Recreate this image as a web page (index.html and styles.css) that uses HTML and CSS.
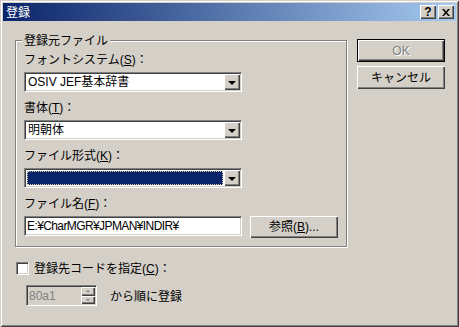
FILE: index.html
```html
<!DOCTYPE html>
<html lang="ja">
<head>
    <meta charset="UTF-8">
    <title>登録</title>
    <link rel="stylesheet" href="styles.css">
</head>
<body>
    <div class="window">
        <div class="titlebar">
            <span class="title">登録</span>
            <div class="caption-btns">
                <span class="cap-btn help">?</span>
                <span class="cap-btn close">
                    <svg width="8" height="7" viewBox="0 0 8 7">
                        <path d="M0 0h2l2 2.5 2-2.5h2l-3 3.5 3 3.5h-2l-2-2.5-2 2.5h-2l3-3.5z" fill="#000"/>
                    </svg>
                </span>
            </div>
        </div>

        <div class="client">
            <div class="main">
                <div class="group">
                    <span class="group-title">登録元ファイル</span>

                    <div class="field-label">フォントシステム(<u>S</u>)：</div>
                    <div class="combo">
                        <div class="combo-text">OSIV JEF基本辞書</div>
                        <span class="drop-btn"><i class="arrow"></i></span>
                    </div>

                    <div class="field-label">書体(<u>T</u>)：</div>
                    <div class="combo">
                        <div class="combo-text">明朝体</div>
                        <span class="drop-btn"><i class="arrow"></i></span>
                    </div>

                    <div class="field-label">ファイル形式(<u>K</u>)：</div>
                    <div class="combo">
                        <div class="combo-text selected"></div>
                        <span class="drop-btn"><i class="arrow"></i></span>
                    </div>

                    <div class="field-label">ファイル名(<u>F</u>)：</div>
                    <div class="file-row">
                        <div class="edit">E:¥CharMGR¥JPMAN¥INDIR¥</div>
                        <div class="btn browse">参照(<u>B</u>)...</div>
                    </div>
                </div>

                <div class="check-row">
                    <span class="checkbox"></span>
                    <span class="check-label">登録先コードを指定(<u>C</u>)：</span>
                </div>

                <div class="spin-row">
                    <div class="spinner">
                        <span class="spin-text">80a1</span>
                        <div class="spin-btns">
                            <span class="spin-btn"><i class="tri up"></i></span>
                            <span class="spin-btn"><i class="tri down"></i></span>
                        </div>
                    </div>
                    <span class="spin-label">から順に登録</span>
                </div>
            </div>

            <div class="side">
                <div class="btn default disabled">OK</div>
                <div class="btn">キャンセル</div>
            </div>
        </div>
    </div>
</body>
</html>
```

FILE: styles.css
```css
body {
    margin: 0;
    background-color: #d4d0c8;
    font-family: "Liberation Sans", "Noto Sans CJK JP", sans-serif;
    font-size: 12px;
    line-height: 14px;
    color: #000;
}
u {
    text-underline-offset: 1px;
}
.window {
    width: 459px;
    height: 327px;
    box-sizing: border-box;
    padding: 3px;
    background-color: #d4d0c8;
    box-shadow: inset 1px 1px #d4d0c8, inset -1px -1px #404040,
                inset 2px 2px #fff, inset -2px -2px #808080;
}
.titlebar {
    height: 18px;
    display: flex;
    align-items: center;
    justify-content: space-between;
    padding: 0 2px 0 2px;
    background: linear-gradient(to right, #0a246a, #a6caf0);
}
.title {
    color: #fff;
    font-family: "Noto Sans CJK JP", sans-serif;
    padding-left: 1px;
}
.caption-btns {
    display: flex;
    gap: 2px;
}
.cap-btn {
    width: 16px;
    height: 14px;
    box-sizing: border-box;
    display: flex;
    align-items: center;
    justify-content: center;
    background-color: #d4d0c8;
    box-shadow: inset 1px 1px #fff, inset -1px -1px #404040, inset -2px -2px #808080;
}
.help {
    font-weight: bold;
    font-size: 12px;
    line-height: 12px;
}
.client {
    display: flex;
    padding: 19px 0 0 12px;
}
.group {
    width: 332px;
    box-sizing: border-box;
    display: flex;
    flex-direction: column;
    align-items: flex-start;
    padding: 0 8px 8px 8px;
    border: 1px solid #808080;
    box-shadow: inset 1px 1px #fff, 1px 1px #fff;
}
.group-title {
    margin: -8px 0 0 -2px;
    padding: 0 2px;
    background-color: #d4d0c8;
    font-family: "Noto Sans CJK JP", sans-serif;
}
.field-label {
    margin-top: 9px;
}
.group-title + .field-label {
    margin-top: 6px;
}
.combo,
.edit {
    width: 218px;
    height: 20px;
    box-sizing: border-box;
    margin-top: 5px;
    display: flex;
    background-color: #fff;
    border: 1px solid;
    border-color: #808080 #fff #fff #808080;
    box-shadow: inset 1px 1px #404040, inset -1px -1px #d4d0c8;
    padding: 1px;
}
.combo-text {
    flex: 1;
    padding: 1px 2px;
    line-height: 14px;
}
.combo-text.selected {
    margin: 1px;
    background-color: #0a246a;
    outline: 1px dotted #d8d0a0;
    outline-offset: -1px;
}
.drop-btn {
    width: 16px;
    height: 16px;
    box-sizing: border-box;
    display: flex;
    align-items: center;
    justify-content: center;
    background-color: #d4d0c8;
    box-shadow: inset 1px 1px #fff, inset -1px -1px #404040, inset -2px -2px #808080;
}
.arrow {
    width: 0;
    height: 0;
    border-left: 4px solid transparent;
    border-right: 4px solid transparent;
    border-top: 4px solid #000;
    margin-top: 1px;
}
.file-row {
    display: flex;
    gap: 8px;
    margin-top: 5px;
}
.file-row .edit {
    margin-top: 0;
    padding: 2px 2px 0;
    letter-spacing: -0.6px;
}
.btn {
    width: 88px;
    height: 23px;
    box-sizing: border-box;
    display: flex;
    align-items: center;
    justify-content: center;
    background-color: #d4d0c8;
    box-shadow: inset 1px 1px #fff, inset -1px -1px #404040, inset -2px -2px #808080;
}
.btn.browse {
    height: 22px;
}
.btn.default {
    border: 1px solid #000;
    box-shadow: inset 1px 1px #fff, inset -1px -1px #404040, inset -2px -2px #808080;
}
.btn.disabled {
    color: #808080;
    text-shadow: 1px 1px #fff;
}
.check-row {
    display: flex;
    align-items: center;
    margin-top: 15px;
    height: 13px;
}
.checkbox {
    width: 13px;
    height: 13px;
    box-sizing: border-box;
    margin-left: 1px;
    background-color: #fff;
    border: 1px solid;
    border-color: #808080 #fff #fff #808080;
    box-shadow: inset 1px 1px #404040, inset -1px -1px #d4d0c8;
}
.check-label {
    margin-left: 5px;
}
.spin-row {
    display: flex;
    align-items: center;
    margin-top: 10px;
}
.spinner {
    width: 71px;
    height: 21px;
    box-sizing: border-box;
    margin-left: 11px;
    display: flex;
    justify-content: space-between;
    padding: 1px;
    border: 1px solid;
    border-color: #808080 #fff #fff #808080;
    box-shadow: inset 1px 1px #404040, inset -1px -1px #d4d0c8;
}
.spin-text {
    padding: 2px 1px 0;
    color: #808080;
}
.spin-btns {
    display: flex;
    flex-direction: column;
    width: 14px;
}
.spin-btn {
    flex: 1;
    display: flex;
    align-items: center;
    justify-content: center;
    box-shadow: inset 1px 1px #fff, inset -1px -1px #404040, inset -2px -2px #808080;
}
.tri {
    width: 0;
    height: 0;
    border-left: 2px solid transparent;
    border-right: 2px solid transparent;
}
.tri.up {
    border-bottom: 2px solid #808080;
}
.tri.down {
    border-top: 2px solid #808080;
}
.spin-label {
    margin-left: 13px;
    font-family: "Noto Sans CJK JP", sans-serif;
}
.side {
    display: flex;
    flex-direction: column;
    gap: 4px;
    margin: -1px 0 0 10px;
}
```
